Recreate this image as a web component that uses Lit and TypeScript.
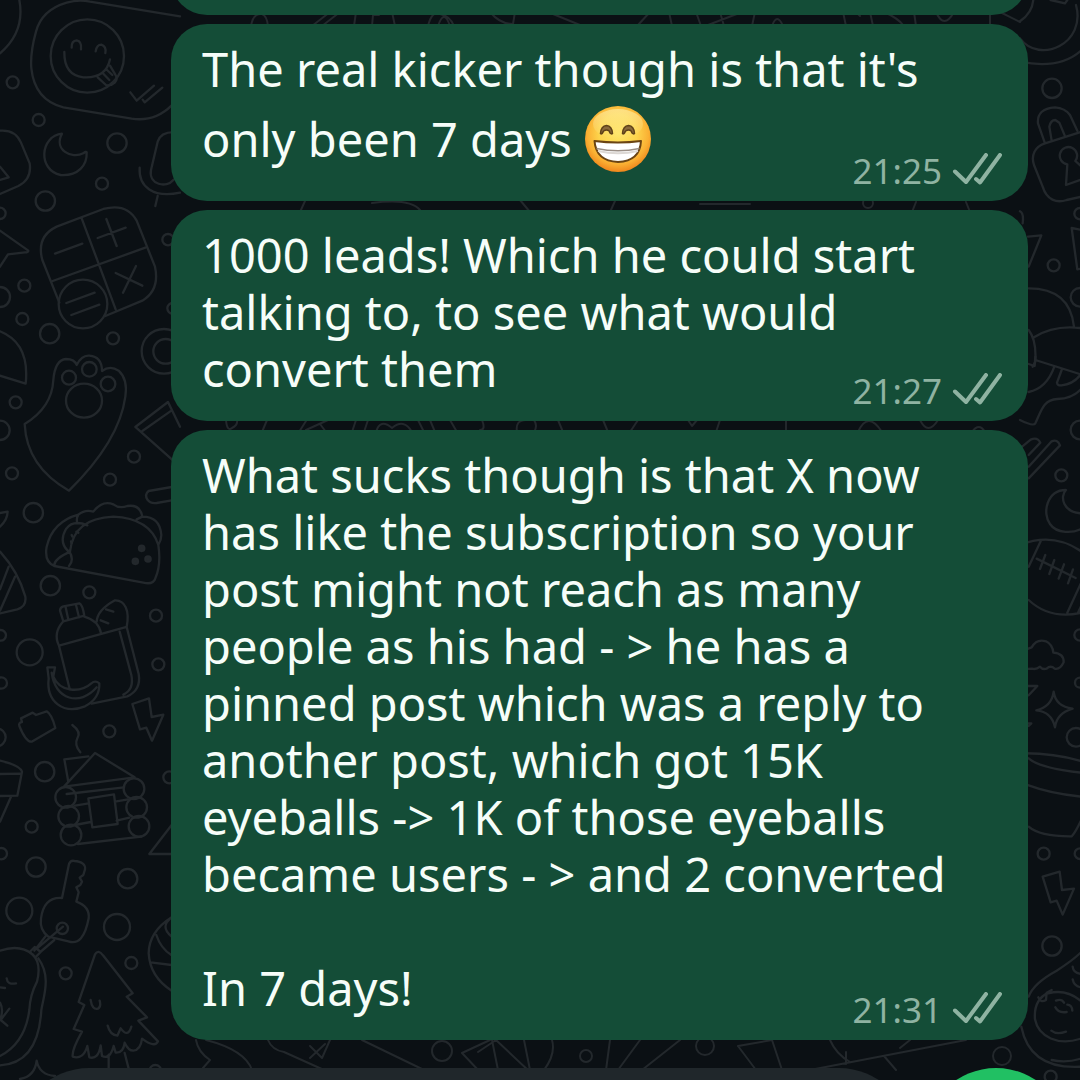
import { LitElement, html, svg, css } from "lit";
import { customElement, property } from "lit/decorators.js";

/** Line drawings of the wallpaper, grouped by the area they decorate. */
const topLeft = svg`
  <path d="M58 0Q76 95 0 160"/>
  <path d="M540 49L270 5Q235 -2 200 8Q125 30 108 95Q90 160 94 205Q104 300 190 322L395 356Q465 366 515 316"/>
  <circle cx="262" cy="168" r="110"/>
  <path d="M215 143Q214 122 230 121Q246 124 243 148M287 154Q290 134 304 134Q320 140 316 159M193 156Q192 225 250 232Q318 236 330 178M293 232L318 255Q332 259 345 247Q354 236 346 224L330 197M308 219L328 240M318 207L337 225"/>
  <path d="M391 277L410 302L462 257M428 299L434 307L487 263"/>
  <circle cx="38" cy="247" r="18"/><circle cx="116" cy="360" r="18"/><circle cx="351" cy="429" r="29"/>
  <circle cx="306" cy="551" r="18"/><circle cx="136" cy="603" r="29"/><circle cx="0" cy="640" r="17"/>
  <path d="M186 401C120 408 112 510 182 525C235 528 262 495 260 457Q258 453 250 460C215 478 160 450 186 401Z"/>
  <path d="M0 392Q46 388 63 428L89 490Q96 538 55 558L0 582M0 500L26 532L0 540"/>
  <path d="M540 398Q484 390 473 425L453 510C445 555 500 565 520 540M419 503C415 560 460 595 540 578M473 588L466 618"/>`;

const upperLeft = svg`
  <path d="M178 308L127 180Q108 110 170 80L310 27Q380 8 410 62L465 200Q480 270 427 302L316 348M245 55L347 328M158 243L436 143M165 161L247 131M319 57L350 138M293 114L377 83M347 219L427 257M408 198L369 278"/>
  <circle cx="249" cy="312" r="73"/><path d="M199 309L284 278M214 345L298 314"/>
  <path d="M0 92L85 152Q85 157 75 157L24 163L0 200"/>
  <circle cx="0" cy="291" r="30"/><circle cx="73" cy="257" r="18"/><circle cx="67" cy="357" r="18"/>
  <circle cx="149" cy="401" r="29"/><circle cx="339" cy="415" r="18"/><circle cx="504" cy="119" r="17"/><circle cx="518" cy="325" r="16"/>
  <circle cx="492" cy="454" r="67"/><circle cx="497" cy="454" r="37"/>
  <path d="M0 394Q90 430 77 551L0 527"/>
  <circle cx="47" cy="607" r="18"/><circle cx="0" cy="691" r="29"/><circle cx="36" cy="820" r="18"/>
  <path d="M207 872Q80 800 74 672Q156 622 160 540Q165 480 198 477Q224 477 230 495Q245 465 268 467Q306 470 306 513Q330 495 356 512Q384 538 376 590C360 710 270 810 207 872Z"/>
  <circle cx="207" cy="533" r="21"/><circle cx="268" cy="508" r="22"/><circle cx="324" cy="552" r="22"/><ellipse cx="252" cy="602" rx="54" ry="51"/>
  <path d="M540 680L504 606L406 681L540 800M427 693L514 632"/>
  <circle cx="402" cy="770" r="18"/><circle cx="330" cy="839" r="18"/>
  <path d="M515 861L446 873Q432 884 443 900Q450 911 470 909L515 901"/>`;

const middleLeft = svg`
  <path d="M0 69L23 65Q22 90 0 110"/><circle cx="100" cy="68" r="29"/>
  <path d="M163 228Q132 215 140 170Q158 95 235 74Q256 57 280 65Q307 30 340 43Q358 57 382 48Q420 42 427 80Q480 80 484 135Q484 150 475 165Q484 225 466 265Q460 285 430 278L163 228Q160 208 210 185Q220 85 340 80Q450 85 475 165M235 74Q228 86 232 100M262 106Q220 88 198 117Q176 155 203 182M410 88L427 80M207 228Q224 210 207 182"/>
  <g class="dot"><circle cx="425" cy="175" r="8"/><circle cx="444" cy="207" r="8"/><circle cx="406" cy="214" r="8"/></g>
  <path d="M215 135L217 140M229 125L235 128M213 154L215 160"/>
  <path d="M0 185Q55 245 76 320Q80 350 52 358L0 370M26 230L0 298M45 260L0 362"/>
  <circle cx="151" cy="287" r="29"/><circle cx="268" cy="307" r="18"/><circle cx="468" cy="377" r="18"/><circle cx="475" cy="523" r="18"/>
  <circle cx="89" cy="487" r="39"/><circle cx="2" cy="436" r="16"/><circle cx="4" cy="579" r="17"/><circle cx="-10" cy="742" r="27"/>
  <path d="M190 394L180 362Q180 352 190 349L238 340Q248 345 253 378M197 352L205 389M228 345L237 382M190 394L250 378M190 394Q158 430 177 467L380 411C390 360 374 330 345 331Q292 360 290 395M318 358L340 365M302 391L325 400M253 380Q296 392 303 430M177 467L209 597M380 411L416 552Q424 600 382 619L275 641M359 425L394 555Q403 598 370 614"/>
  <path d="M142 532L165 532L160 560C180 606 240 610 274 580Q286 570 298 580Q300 625 255 649C190 675 138 635 146 565ZM155 548C165 630 240 650 290 592"/>
  <path d="M63 685L98 668L108 675L140 664Q155 672 166 714L95 755Q78 757 58 708Q55 698 66 696Z"/>
  <path d="M397 642L447 625L455 681L490 674L456 752L439 713L420 718Z"/>
  <path d="M217 705Q245 726 232 745Q222 765 241 787"/>
  <circle cx="328" cy="724" r="18"/><circle cx="134" cy="845" r="29"/><circle cx="508" cy="862" r="18"/>
  <path d="M0 812Q60 826 66 845L52 917L0 918M0 852L62 851M34 918L0 995"/>
  <path d="M205 876L193 808L265 799M192 890L285 789L404 862L192 890M200 912L372 892"/>`;

const lowerLeft = svg`
  <circle cx="197" cy="52" r="31"/><circle cx="206" cy="109" r="31"/><circle cx="213" cy="165" r="31"/>
  <circle cx="402" cy="26" r="31"/><circle cx="410" cy="82" r="31"/><circle cx="417" cy="139" r="31"/>
  <path d="M265 55L342 43L353 132L277 142ZM225 77L266 70M345 65L384 58M225 135L272 126M350 122L388 113M234 192L424 170"/>
  <path d="M515 135L448 222H515"/>
  <circle cx="95" cy="140" r="18"/><circle cx="4" cy="221" r="17"/><circle cx="108" cy="261" r="29"/><circle cx="383" cy="296" r="29"/>
  <circle cx="58" cy="392" r="39"/><circle cx="351" cy="441" r="39"/>
  <path d="M186 354L207 252Q212 240 223 243Q258 246 255 268L250 285L239 293L246 305L241 315L229 322L236 337L229 365Q270 380 266 415Q250 500 205 484L145 470Q118 450 123 415Q132 350 186 354Z"/>
  <circle cx="187" cy="445" r="17"/><path d="M189 440L111 505M138 467L103 512M163 480L121 516M104 501L122 516L106 532L89 516Z"/>
  <path d="M0 512Q60 492 98 523Q125 550 111 605Q90 645 88 690Q75 790 0 828M115 535C155 590 130 650 124 690Q115 850 0 856M20 595Q22 615 48 610M0 622L15 624M0 668Q12 690 0 720M28 686L2 720L22 737"/>
  <circle cx="197" cy="580" r="18"/><circle cx="394" cy="549" r="18"/>
  <path d="M285 523Q295 507 309 526L398 640L380 650L441 712L415 722L474 784Q465 805 426 776Q422 810 400 812Q385 812 374 788Q370 820 347 818L341 798Q330 840 306 828L302 796Q295 840 268 832L262 798Q250 840 218 830Q215 810 246 755L221 747L253 675L236 666ZM272 660Q276 690 294 686Q304 680 299 662M323 737Q330 765 352 767L362 745Q384 775 394 740M326 824V866M374 819L386 866"/>
  <path d="M515 412Q447 455 446 520Q450 590 515 632M515 412Q478 440 515 470M469 465Q482 505 515 526M452 547L515 555"/>
  <path d="M60 897Q104 890 110 842Q118 885 165 888"/><circle cx="466" cy="873" r="18"/>`;

const upperRight = svg`
  <path d="M40 0Q36 40 0 64M92 0L135 10L142 0M168 15C200 130 60 195 0 115M0 185Q120 210 185 150"/>
  <circle cx="96" cy="265" r="29"/>
  <path d="M75 430L54 370Q50 326 105 322Q135 324 150 345L172 392M95 422L88 380Q92 360 106 360L118 368L134 406M185 395L75 430C45 440 32 465 42 495L68 560C80 600 110 610 140 600L185 590"/>
  <path d="M142 493A26 26 0 1 1 166 483L185 500M142 493L138 555L185 538"/>
  <path d="M0 634Q12 640 8 670M24 710L64 706L26 800M185 690L155 684L172 808L185 806"/>
  <circle cx="101" cy="796" r="18"/><circle cx="180" cy="641" r="17"/><circle cx="180" cy="892" r="28"/>
  <path d="M26 865Q150 865 162 980M42 1012Q100 975 180 984M26 990Q50 1020 46 1085L38 1100"/>`;

const middleRight = svg`
  <path d="M46 60L185 104M26 72L44 78L46 50M103 80Q80 145 26 156M125 90L111 128Q112 138 125 136Q160 132 180 106M185 145Q160 176 112 177C70 180 65 210 46 250Q40 260 0 240"/>
  <circle cx="180" cy="270" r="28"/><circle cx="124" cy="406" r="18"/>
  <path d="M0 325L32 299Q52 290 61 308L26 345M26 380L95 304Q112 296 120 316L26 415"/>
  <path d="M185 520C130 518 118 470 138 450C80 450 66 520 90 552C110 582 160 580 185 566"/>
  <path d="M0 615Q100 575 185 635M26 780Q90 840 185 818M62 604L26 680M185 725L142 818M185 795L174 818M50 656L167 714M76 645L60 687M103 660L88 702M132 673L116 716M159 688L144 730"/>
  <path d="M0 935L35 922Q50 895 78 904Q98 914 100 938Q132 940 131 967Q120 990 104 986Q92 975 80 986Q68 990 60 980Q48 990 36 986L0 988"/>
  <path d="M0 1038H52L26 1066"/>
  <circle cx="180" cy="885" r="17"/><circle cx="180" cy="1028" r="15"/>
  <path d="M101 1055Q107 1100 158 1106Q110 1120 105 1162Q95 1115 49 1111Q95 1100 101 1055Z"/>`;

const lowerRight = svg`
  <circle cx="168" cy="112" r="28"/>
  <path d="M0 160Q100 158 185 184M26 175Q60 205 185 218M26 256Q90 280 185 290M26 380Q60 410 155 409Q165 400 185 358M24 70H34L26 78"/>
  <circle cx="71" cy="461" r="18"/><circle cx="180" cy="461" r="16"/><circle cx="96" cy="738" r="29"/>
  <path d="M68 530L119 515L126 570L162 566L128 644L110 602L92 607Z"/>
  <path d="M26 890Q40 850 110 812Q160 780 185 755M4 980Q30 1110 185 1100M95 1080Q140 1090 185 1075"/>
  <path d="M85 878Q40 900 45 958C55 1010 115 1040 185 1015M55 892Q62 910 78 900L80 878L95 870M85 880Q140 865 185 905M108 902Q125 895 132 908M106 922Q115 940 140 936M142 914Q156 915 157 932M94 992Q110 1005 138 995M158 800Q160 820 185 822M158 838Q162 860 185 862"/>
  <circle cx="92" cy="1130" r="18"/>`;

/** Drawings that show in the gaps between two bubbles, in page units. */
const gaps = svg`
  <path d="M224 25L228 28L232 25M251 26Q253 13 262 14Q267 16 268 26M312 26L330 12M322 26L340 12M356 12L354 26M372 26L373 15H379M392 12L395 26M428 26Q432 10 440 14Q450 16 454 26M438 26Q444 8 450 26M490 12Q500 24 513 24L515 12M548 12L580 25M638 25L650 12M669 12L672 26M696 12L701 26M708 25L742 12M720 12L724 26M752 26L755 12M772 26Q777 12 783 26M843 12L846 26M856 12L860 16M870 12L873 26M884 12Q898 18 904 26M914 12L916 26M936 12Q944 30 954 12M990 12V24M1000 12L1020 22"/>
  <circle cx="868" cy="203" r="5"/><path d="M912 212L916 202M966 202L970 212M300 212L305 201M372 203Q410 198 420 210M520 200L530 212M610 212L615 201M700 204H750"/>
  <path d="M226 420Q227 432 232 428Q238 425 237 420M262 432L267 420M299 432L306 421M306 430L328 420M320 424L326 432M352 432L356 420M364 432L368 420M376 432Q380 418 392 428Q404 418 412 432M418 420L424 432M430 420L435 432M450 420L457 432M482 420Q486 430 480 430M517 432Q515 420 526 420M534 420Q538 426 534 432M558 420L563 432M603 420L608 432M630 432L638 420M688 420L692 426L697 420M716 432L720 420M786 420V432M858 432Q868 410 882 432M920 420Q928 436 938 420M972 432Q979 422 985 432"/>
  <path d="M196 1040Q198 1052 210 1060L203 1068M206 1040Q245 1050 252 1070M268 1040Q272 1050 284 1052L324 1070M362 1040L424 1070M310 1046L322 1058L330 1040M310 1058L325 1044M490 1040L462 1053L480 1072M478 1052L496 1040L530 1072M492 1040L498 1070M524 1040L530 1070M552 1040Q556 1054 544 1070M610 1040L606 1070M640 1040L618 1070M680 1040L642 1070M738 1046L772 1040L782 1070M738 1046L756 1070M830 1040Q836 1054 850 1062M910 1040L900 1048M966 1040L810 1070M884 1056L896 1070M846 1052V1064"/>
  <circle cx="442" cy="1051" r="10"/><circle cx="586" cy="1056" r="6"/><circle cx="705" cy="1046" r="9"/><circle cx="1002" cy="1056" r="9"/>`;

@customElement("chat-wallpaper")
export class ChatWallpaper extends LitElement {
  static styles = css`
    :host { position: absolute; inset: 0; overflow: hidden; }
    svg { display: block; width: 100%; height: 100%; fill: none; stroke: #23282c; stroke-linecap: round; stroke-linejoin: round; }
    .detail { stroke-width: 7; }
    .gap { stroke-width: 2; }
    .dot { fill: #23282c; }
  `;
  render() {
    return html`<svg viewBox="0 0 1080 1080" preserveAspectRatio="xMinYMin slice" aria-hidden="true">
      <g class="gap">${gaps}</g>
      <g class="detail" transform="scale(.33333)">
        ${topLeft}
        <g transform="translate(0 600)">${upperLeft}</g>
        <g transform="translate(0 1470)">${middleLeft}</g>
        <g transform="translate(0 2340)">${lowerLeft}</g>
        <g transform="translate(3060 0)">${upperRight}</g>
        <g transform="translate(3060 1020)">${middleRight}</g>
        <g transform="translate(3060 2100)">${lowerRight}</g>
      </g>
    </svg>`;
  }
}

@customElement("grin-emoji")
export class GrinEmoji extends LitElement {
  static styles = css`
    :host { display: inline-block; vertical-align: -21px; }
    svg { display: block; width: 68px; height: 80px; }
  `;
  render() {
    return html`<svg viewBox="0 0 68 80" role="img" aria-label="😁">
      <defs>
        <radialGradient id="face" cx=".5" cy=".42" r=".58">
          <stop offset="0" stop-color="#ffe566"/><stop offset=".5" stop-color="#fdd44c"/>
          <stop offset=".8" stop-color="#fab033"/><stop offset="1" stop-color="#f0861c"/>
        </radialGradient>
        <linearGradient id="shine" x1="0" y1="0" x2="0" y2="1">
          <stop offset="0" stop-color="#fff3b0" stop-opacity=".6"/><stop offset="1" stop-color="#fff3b0" stop-opacity="0"/>
        </linearGradient>
      </defs>
      <circle cx="34" cy="41" r="33" fill="url(#face)"/>
      <ellipse cx="34" cy="26" rx="25" ry="15" fill="url(#shine)"/>
      <g fill="#8a6a3c" stroke="#5f4218" stroke-width="1.500" stroke-linejoin="round">
        <path d="M16.500 35.500Q17 28 22.500 27.500Q28 28 28.500 35.500Q27.500 36.500 26 35Q25.500 32 22.500 32Q19.500 32 18.500 35Q17.500 36.500 16.500 35.500Z"/>
        <path d="M38.500 35.500Q39 28 44.500 27.500Q50 28 50.500 35.500Q49.500 36.500 48 35Q47.500 32 44.500 32Q41.500 32 40.500 35Q39.500 36.500 38.500 35.500Z"/>
      </g>
      <path d="M10.500 43Q34 46 57 43Q56 63 34 64Q12 63 10.500 43Z" fill="#fff" stroke="#6b4413" stroke-width="2" stroke-linejoin="round"/>
      <path d="M12.500 50.500Q34 55 55.500 50.500" fill="none" stroke="#9a8f86" stroke-width="1.500"/>
      <path d="M14 53Q34 57.500 54 53" fill="none" stroke="#dcd8d4" stroke-width="2"/>
    </svg>`;
  }
}

@customElement("chat-bubble")
export class ChatBubble extends LitElement {
  @property() time = "";
  static styles = css`
    :host { box-sizing: border-box; display: grid; min-height: 80px; padding: 17px 26px 0 31px; border-radius: 36px; background: #144d37; }
    .text { grid-area: 1 / 1; margin: 0; padding-bottom: 23px; color: #f6fdf9; font-size: 47px; line-height: 57px; white-space: pre-line; }
    .meta { grid-area: 1 / 1; align-self: end; justify-self: end; display: flex; align-items: center; gap: 10px; padding-bottom: 10px; color: #8fb3a2; font-size: 35px; line-height: 40px; }
    svg { width: 50px; height: 32px; margin-bottom: 4px; fill: none; stroke: currentColor; stroke-width: 4; stroke-linejoin: round; stroke-linecap: round; }
  `;
  render() {
    return html`
      <p class="text"><slot></slot></p>
      ${this.time
        ? html`<span class="meta"><time>${this.time}</time>
            <svg viewBox="0 0 50 32" aria-hidden="true"><path d="M3 18.500L14 29L34 2M24 26L28 29.500L48 2"/></svg></span>`
        : ""}`;
  }
}

@customElement("app-root")
export class AppRoot extends LitElement {
  static styles = css`
    :host { position: relative; display: flex; flex-direction: column; height: 100vh; overflow: hidden; background: #0b1014; font-family: "Noto Sans", Roboto, sans-serif; }
    main { position: relative; display: flex; flex-direction: column; gap: 9px; margin-top: -65px; padding: 0 52px 28px 171px; }
    footer { position: relative; display: flex; flex: none; gap: 13px; padding: 0 12px 12px 17px; }
    input { flex: 1; min-width: 0; height: 144px; padding: 0 48px; border: 0; border-radius: 72px; background: #20272b; color: #f6fdf9; font: inherit; font-size: 47px; }
    button { flex: none; width: 144px; height: 144px; border: 0; border-radius: 50%; background: #21c063; }
  `;
  render() {
    return html`
      <chat-wallpaper></chat-wallpaper>
      <main>
        <chat-bubble></chat-bubble>
        <chat-bubble time="21:25">The real kicker though is that it's
only been 7 days <grin-emoji></grin-emoji></chat-bubble>
        <chat-bubble time="21:27">1000 leads! Which he could start
talking to, to see what would
convert them</chat-bubble>
        <chat-bubble time="21:31">What sucks though is that X now
has like the subscription so your
post might not reach as many
people as his had - > he has a
pinned post which was a reply to
another post, which got 15K
eyeballs -> 1K of those eyeballs
became users - > and 2 converted

In 7 days!</chat-bubble>
      </main>
      <footer>
        <input type="text" aria-label="Message" />
        <button type="button" aria-label="Voice message"></button>
      </footer>`;
  }
}
